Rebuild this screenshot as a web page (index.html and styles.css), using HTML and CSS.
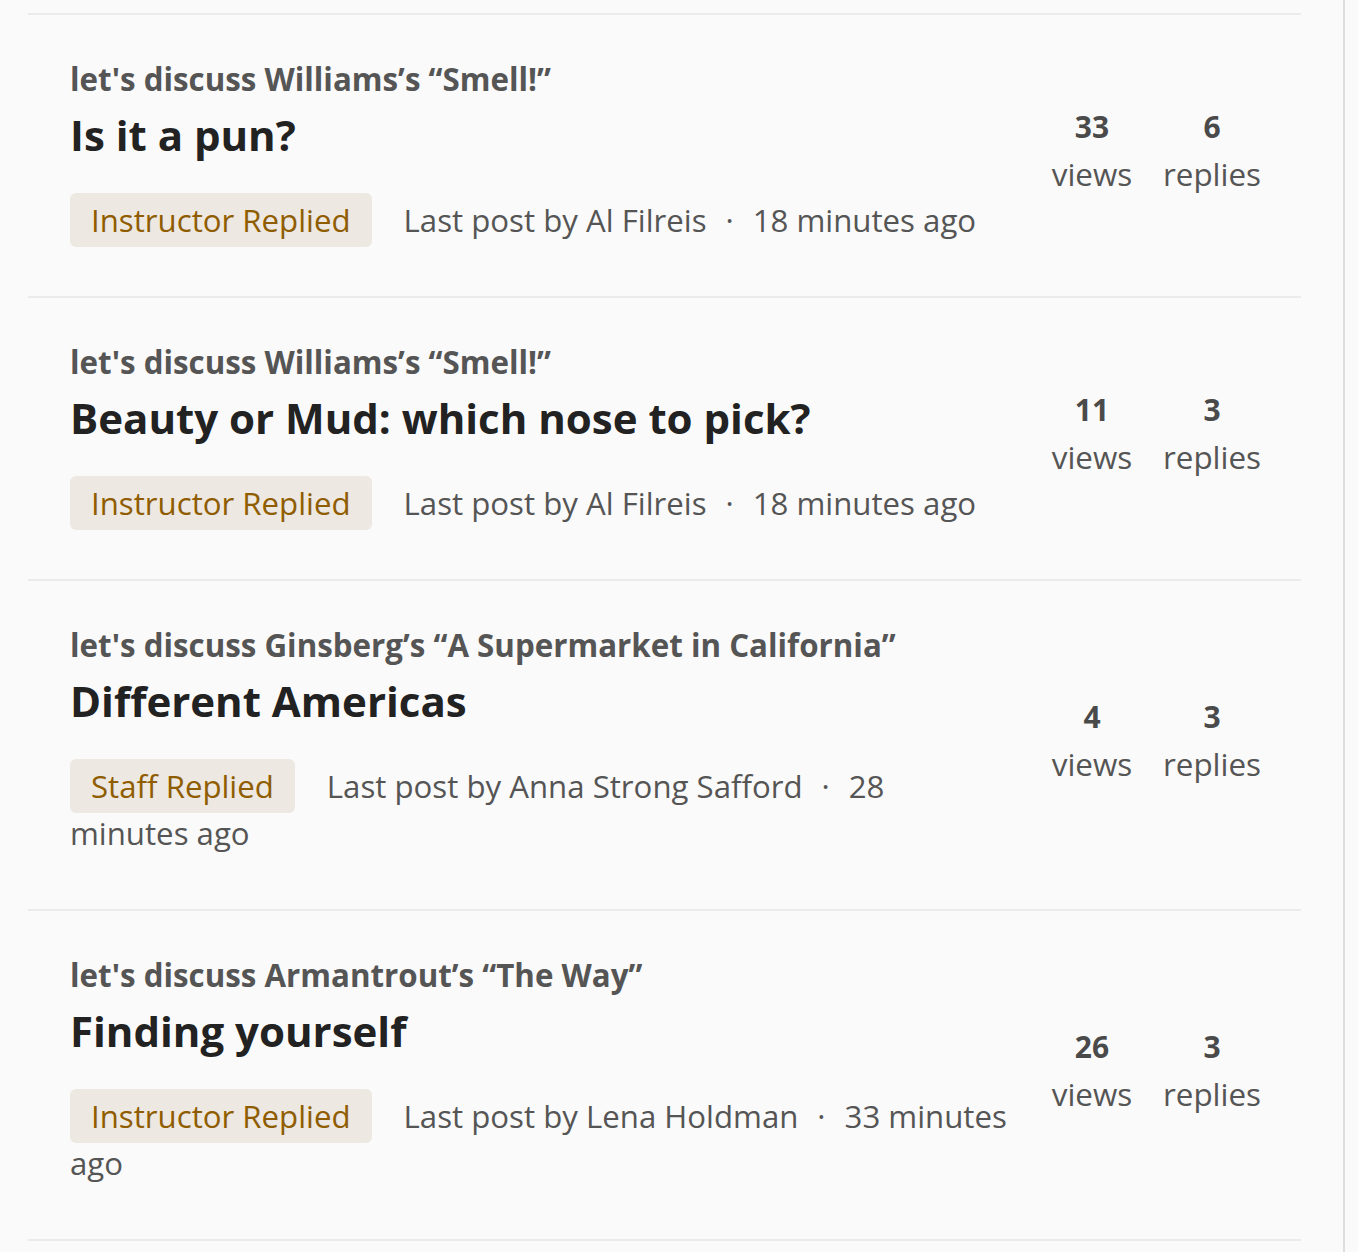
FILE: index.html
```html
<!DOCTYPE html>
<html lang="en">
<head>
  <meta charset="UTF-8">
  <title>Discussions</title>
  <link rel="stylesheet" href="styles.css">
</head>
<body>
  <div class="painel">
    <ul class="topicos">
      <li class="topico">
        <div class="conteudo">
          <div class="categoria">let's discuss Williams’s “Smell!”</div>
          <h2 class="titulo">Is it a pun?</h2>
          <div class="meta"><span class="tag">Instructor Replied</span>Last post by Al Filreis<span class="ponto">·</span>18 minutes ago</div>
        </div>
        <div class="stats">
          <div class="stat"><strong>33</strong><span>views</span></div>
          <div class="stat"><strong>6</strong><span>replies</span></div>
        </div>
      </li>
      <li class="topico">
        <div class="conteudo">
          <div class="categoria">let's discuss Williams’s “Smell!”</div>
          <h2 class="titulo">Beauty or Mud: which nose to pick?</h2>
          <div class="meta"><span class="tag">Instructor Replied</span>Last post by Al Filreis<span class="ponto">·</span>18 minutes ago</div>
        </div>
        <div class="stats">
          <div class="stat"><strong>11</strong><span>views</span></div>
          <div class="stat"><strong>3</strong><span>replies</span></div>
        </div>
      </li>
      <li class="topico">
        <div class="conteudo">
          <div class="categoria">let's discuss Ginsberg’s “A Supermarket in California”</div>
          <h2 class="titulo">Different Americas</h2>
          <div class="meta"><span class="tag">Staff Replied</span>Last post by Anna Strong Safford<span class="ponto">·</span>28 minutes ago</div>
        </div>
        <div class="stats">
          <div class="stat"><strong>4</strong><span>views</span></div>
          <div class="stat"><strong>3</strong><span>replies</span></div>
        </div>
      </li>
      <li class="topico">
        <div class="conteudo">
          <div class="categoria">let's discuss Armantrout’s “The Way”</div>
          <h2 class="titulo">Finding yourself</h2>
          <div class="meta"><span class="tag">Instructor Replied</span>Last post by Lena Holdman<span class="ponto">·</span>33 minutes ago</div>
        </div>
        <div class="stats">
          <div class="stat"><strong>26</strong><span>views</span></div>
          <div class="stat"><strong>3</strong><span>replies</span></div>
        </div>
      </li>
    </ul>
  </div>
</body>
</html>
```

FILE: styles.css
```css
body {
  margin: 0;
  font-family: "Open Sans", "Liberation Sans", sans-serif;
  background-color: #fafafa;
  color: #555;
}
.painel {
  width: 1345px;
  padding: 13px 42px 0 28px;
  box-sizing: border-box;
  border-right: 2px solid #dedede;
  min-height: 1252px;
}
.topicos {
  list-style: none;
  margin: 0;
  padding: 0;
  border-bottom: 2px solid #ebebeb;
}
.topico {
  display: flex;
  align-items: center;
  padding: 41px 39px 52px 42px;
  border-top: 2px solid #ebebeb;
}
.conteudo {
  flex: 1;
  min-width: 0;
}
.categoria {
  font-size: 31.3px;
  line-height: 47px;
  font-weight: 700;
  color: #555;
}
.titulo {
  margin: 6px 0 36px;
  font-size: 42px;
  line-height: 52px;
  font-weight: 700;
  color: #222;
}
.meta {
  font-size: 31.2px;
  line-height: 47px;
  color: #555;
}
.tag {
  padding: 6px 21px;
  margin-right: 32px;
  background-color: #ede8e1;
  color: #8f5d00;
  border-radius: 6px;
}
.ponto {
  margin: 0 19px;
}
.stats {
  display: flex;
  gap: 20px;
  margin-left: 32px;
}
.stat {
  display: flex;
  flex-direction: column;
  align-items: center;
  width: 100px;
  font-size: 31.4px;
  line-height: 47px;
}
.stat strong {
  font-weight: 700;
  font-size: 30px;
  color: #4a4a4a;
}
```
